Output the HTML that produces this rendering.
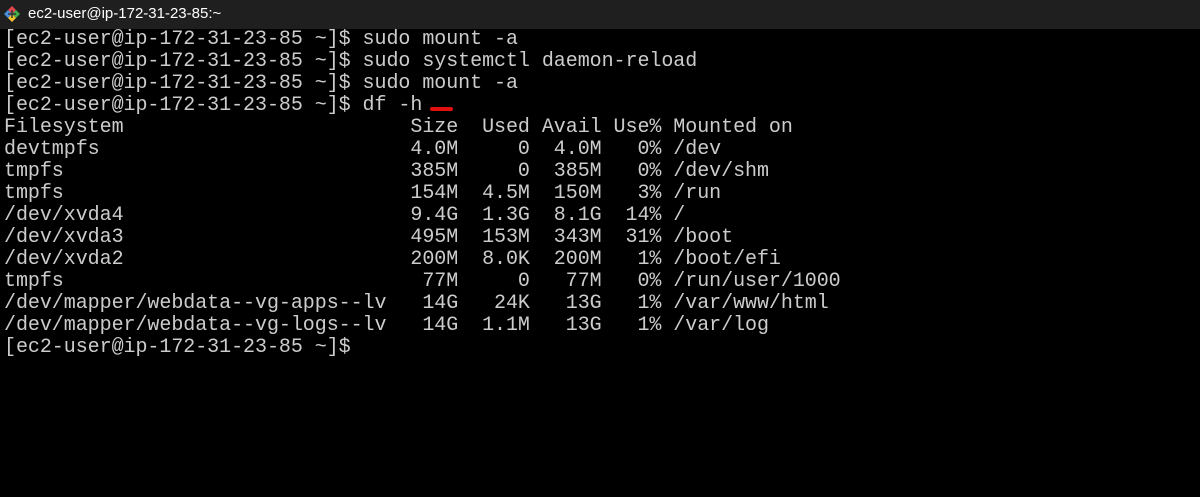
<!DOCTYPE html>
<html><head><style>
body{margin:0;width:1200px;height:497px;background:#000;overflow:hidden;position:relative}
.tb{position:absolute;left:0;top:0;width:1200px;height:29px;background:#1f1f1f;color:#fff;font:15px "Liberation Sans",sans-serif}
.tb span{position:absolute;left:28px;top:5px}
pre{position:absolute;left:4px;top:29px;margin:0;font:20px/22px "Liberation Mono",monospace;color:#cccccc;letter-spacing:-0.05px}
.red{position:absolute;left:430px;top:107px;width:23px;height:4px;background:#e01010;border-radius:2px}
</style></head><body>
<div class="tb"><svg style="position:absolute;left:3px;top:5px" width="18" height="18" viewBox="0 0 18 18"><path d="M9 1 L13 5 L9 9 L5 5Z" fill="#e8464e"/><path d="M13 5 L17 9 L13 13 L9 9Z" fill="#3fae49"/><path d="M9 9 L13 13 L9 17 L5 13Z" fill="#f7c32d"/><path d="M5 5 L9 9 L5 13 L1 9Z" fill="#4a8fd9"/><path d="M5 9 H13 M9 5 V13" stroke="#333" stroke-width="1.5"/></svg><span>ec2-user@ip-172-31-23-85:~</span></div>
<pre>[ec2-user@ip-172-31-23-85 ~]$ sudo mount -a
[ec2-user@ip-172-31-23-85 ~]$ sudo systemctl daemon-reload
[ec2-user@ip-172-31-23-85 ~]$ sudo mount -a
[ec2-user@ip-172-31-23-85 ~]$ df -h
Filesystem                        Size  Used Avail Use% Mounted on
devtmpfs                          4.0M     0  4.0M   0% /dev
tmpfs                             385M     0  385M   0% /dev/shm
tmpfs                             154M  4.5M  150M   3% /run
/dev/xvda4                        9.4G  1.3G  8.1G  14% /
/dev/xvda3                        495M  153M  343M  31% /boot
/dev/xvda2                        200M  8.0K  200M   1% /boot/efi
tmpfs                              77M     0   77M   0% /run/user/1000
/dev/mapper/webdata--vg-apps--lv   14G   24K   13G   1% /var/www/html
/dev/mapper/webdata--vg-logs--lv   14G  1.1M   13G   1% /var/log
[ec2-user@ip-172-31-23-85 ~]$</pre>
<div class="red"></div>
</body></html>
